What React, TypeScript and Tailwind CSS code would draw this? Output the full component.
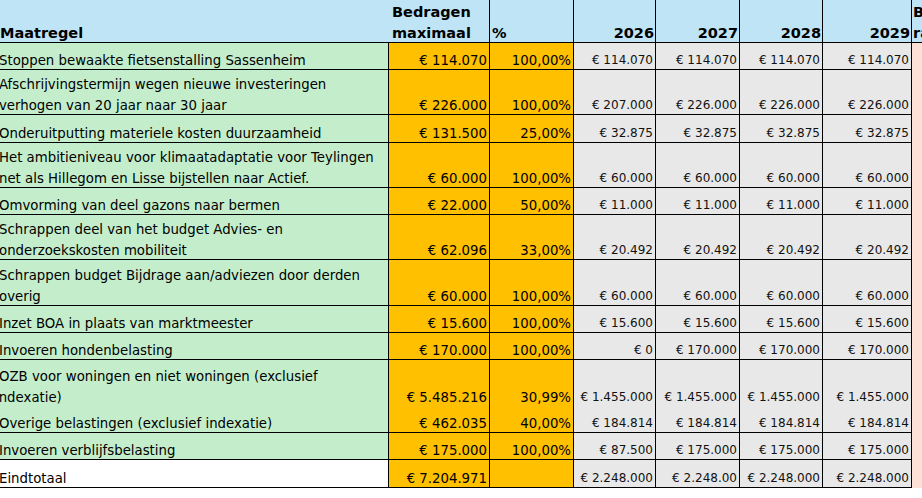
import React from "react";

type Row = {
  label: React.ReactNode[];
  h: string;
  max: string;
  pct: string;
  years: string[];
  noLine?: boolean;
  total?: boolean;
};

const rows: Row[] = [
  { label: ["Stoppen bewaakte fietsenstalling Sassenheim"], h: "h-[27px]", max: "€ 114.070", pct: "100,00%", years: ["€ 114.070", "€ 114.070", "€ 114.070", "€ 114.070"] },
  { label: ["Afschrijvingstermijn wegen nieuwe investeringen", "verhogen van 20 jaar naar 30 jaar"], h: "h-[45px]", max: "€ 226.000", pct: "100,00%", years: ["€ 207.000", "€ 226.000", "€ 226.000", "€ 226.000"] },
  { label: ["Onderuitputting materiele kosten duurzaamheid"], h: "h-[28px]", max: "€ 131.500", pct: "25,00%", years: ["€ 32.875", "€ 32.875", "€ 32.875", "€ 32.875"] },
  { label: ["Het ambitieniveau voor klimaatadaptatie voor Teylingen", "net als Hillegom en Lisse bijstellen naar Actief."], h: "h-[45px]", max: "€ 60.000", pct: "100,00%", years: ["€ 60.000", "€ 60.000", "€ 60.000", "€ 60.000"] },
  { label: ["Omvorming van deel gazons naar bermen"], h: "h-[27px]", max: "€ 22.000", pct: "50,00%", years: ["€ 11.000", "€ 11.000", "€ 11.000", "€ 11.000"] },
  { label: ["Schrappen deel van het budget Advies- en", "onderzoekskosten mobiliteit"], h: "h-[45px]", max: "€ 62.096", pct: "33,00%", years: ["€ 20.492", "€ 20.492", "€ 20.492", "€ 20.492"] },
  { label: ["Schrappen budget Bijdrage aan/adviezen door derden", "overig"], h: "h-[46px]", max: "€ 60.000", pct: "100,00%", years: ["€ 60.000", "€ 60.000", "€ 60.000", "€ 60.000"] },
  { label: ["Inzet BOA in plaats van marktmeester"], h: "h-[27px]", max: "€ 15.600", pct: "100,00%", years: ["€ 15.600", "€ 15.600", "€ 15.600", "€ 15.600"] },
  { label: ["Invoeren hondenbelasting"], h: "h-[27px]", max: "€ 170.000", pct: "100,00%", years: ["€ 0", "€ 170.000", "€ 170.000", "€ 170.000"] },
  { label: ["OZB voor woningen en niet woningen (exclusief", <span className="-ml-[4px]">indexatie)</span>], h: "h-[46px]", max: "€ 5.485.216", pct: "30,99%", years: ["€ 1.455.000", "€ 1.455.000", "€ 1.455.000", "€ 1.455.000"], noLine: true },
  { label: ["Overige belastingen (exclusief indexatie)"], h: "h-[27px]", max: "€ 462.035", pct: "40,00%", years: ["€ 184.814", "€ 184.814", "€ 184.814", "€ 184.814"] },
  { label: ["Invoeren verblijfsbelasting"], h: "h-[27px]", max: "€ 175.000", pct: "100,00%", years: ["€ 87.500", "€ 175.000", "€ 175.000", "€ 175.000"] },
  { label: ["Eindtotaal"], h: "h-[28px]", max: "€ 7.204.971", pct: "", years: ["€ 2.248.000", "€ 2.248.00", "€ 2.248.000", "€ 2.248.000"], total: true },
];

const grid = "grid grid-cols-[392px_101px_84px_82px_84px_83px_89px_1fr]";

function Cell({ children, className }: { children?: React.ReactNode; className: string }) {
  return (
    <div className={`flex flex-col justify-end overflow-hidden whitespace-nowrap ${className}`}>
      <div className="leading-[21px] -mb-[2px]">{children}</div>
    </div>
  );
}

export default function App() {
  return (
    <div className="w-[922px] h-[498px] overflow-hidden bg-white text-black font-['DejaVu_Sans',Verdana,sans-serif]">
      <div className="-ml-[3px] w-[925px]">
        {/* header */}
        <div className={`${grid} h-[43px] bg-[#bee4f5] font-bold text-[14.5px]`}>
          <Cell className="border-b border-black pl-[3px]">Maatregel</Cell>
          <Cell className="border-b border-r border-black pl-[3px]">
            Bedragen
            <br />
            maximaal
          </Cell>
          <Cell className="border-b border-r border-black pl-[2px]">%</Cell>
          {["2026", "2027", "2028", "2029"].map((y) => (
            <Cell key={y} className="border-b border-r border-black text-right pr-[1px]">
              {y}
            </Cell>
          ))}
          <Cell className="border-b border-black pl-[1px]">
            Bedragen
            <br />
            raming
          </Cell>
        </div>

        {rows.map((r, i) => {
          const b = r.noLine ? "border-r border-black" : "border-b border-r border-black";
          return (
            <div key={i} className={`${grid} ${r.h}`}>
              <Cell className={`${b} pl-[2px] text-[13.3px] ${r.total ? "bg-white" : "bg-[#c4eecb]"}`}>
                {r.label.map((l, j) => (
                  <div key={j}>{l}</div>
                ))}
              </Cell>
              <Cell className={`${b} bg-[#ffc000] text-right pr-[2px] text-[13.3px]`}>{r.max}</Cell>
              <Cell className={`${b} bg-[#ffc000] text-right pr-[2px] text-[13.3px]`}>{r.pct}</Cell>
              {r.years.map((y, j) => (
                <Cell key={j} className={`${b} bg-[#e8e8e8] text-right pr-[2px] text-[12px] text-[#111]`}>
                  {y}
                </Cell>
              ))}
              <div className="bg-[#fde1d6]" />
            </div>
          );
        })}
      </div>
    </div>
  );
}
